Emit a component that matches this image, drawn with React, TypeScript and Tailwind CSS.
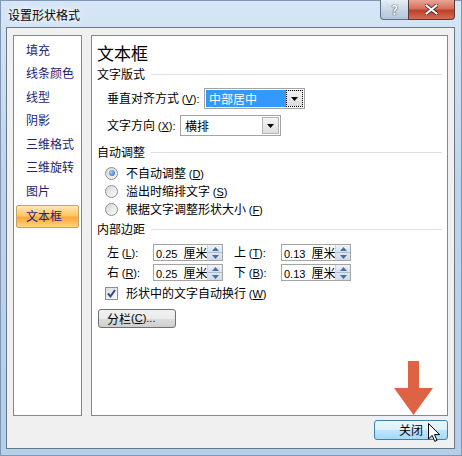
import type { ReactNode } from 'react';

const FONT = { fontFamily: '"Noto Sans CJK SC", "Noto Sans", sans-serif' };
const LATIN = { fontFamily: '"Liberation Sans", sans-serif' };

const items = ['填充', '线条颜色', '线型', '阴影', '三维格式', '三维旋转', '图片'];

function Key({ k, colon }: { k: string; colon?: boolean }) {
  return (
    <span className="text-[11px]" style={LATIN}>
      (<span className="underline">{k}</span>){colon ? ':' : ''}
    </span>
  );
}

function Section({ title }: { title: string }) {
  return (
    <div className="flex h-[18px] items-center gap-[6px] pr-[5px]">
      <span>{title}</span>
      <div className="h-px flex-1 bg-[#d5dfe5]" />
    </div>
  );
}

function Arrow() {
  return (
    <svg width="7" height="4" viewBox="0 0 7 4">
      <path d="M0 0h7L3.5 4z" fill="#000" />
    </svg>
  );
}

function Radio({ on, children }: { on?: boolean; children: ReactNode }) {
  return (
    <div className="flex h-[18px] items-center pl-[8px]">
      <div className="flex h-[13px] w-[13px] items-center justify-center rounded-full border border-[#8e8f8f] bg-[linear-gradient(135deg,#d9d9d9,#fafafa)]">
        {on && <div className="h-[6px] w-[6px] rounded-full bg-[radial-gradient(circle_at_35%_35%,#9fd0ff,#1e63b8)]" />}
      </div>
      <span className="ml-[8px]">{children}</span>
    </div>
  );
}

function Spin({ value }: { value: string }) {
  return (
    <div className="flex h-[17px] w-[70px] shrink-0 border border-[#a5a5a5] bg-white">
      <div className="flex-1 overflow-hidden whitespace-nowrap pl-[2px] text-[12px] leading-[15px]">
        <span className="text-[11px]" style={LATIN}>
          {value}&nbsp;&nbsp;
        </span>
        厘米
      </div>
      <div className="flex w-[15px] flex-col border-l border-[#c9d3dd]">
        <div className="flex flex-1 items-center justify-center border-b border-[#aebccb] bg-[linear-gradient(#eef3f8,#d9e3ee)]">
          <svg width="7" height="4" viewBox="0 0 7 4">
            <path d="M0 4h7L3.5 0z" fill="#4b6fa0" />
          </svg>
        </div>
        <div className="flex flex-1 items-center justify-center bg-[linear-gradient(#dfe7f0,#cfdbe8)]">
          <svg width="7" height="4" viewBox="0 0 7 4">
            <path d="M0 0h7L3.5 4z" fill="#4b6fa0" />
          </svg>
        </div>
      </div>
    </div>
  );
}

export default function App() {
  return (
    <div
      className="relative flex h-[456px] w-[462px] flex-col overflow-hidden bg-[linear-gradient(to_bottom,#d6e6f6,#bcd4ec_40%,#b6cfe9)] pb-[7px] pl-[6px] pr-[7px] text-[12px] text-black shadow-[inset_0_0_0_1px_#7f97b5]"
      style={FONT}
    >
      <div className="flex h-[27px] shrink-0 items-start justify-between">
        <div className="pl-[2px] pt-[7px] text-[12px] leading-[16px] [text-shadow:0_0_5px_#fff,0_0_8px_#fff]">
          设置形状格式
        </div>
        <div className="flex">
          <div className="flex h-[20px] w-[28px] items-center justify-center rounded-bl-[4px] border border-r-0 border-t-0 border-[#5b6f88] bg-[linear-gradient(#e7eef6,#c8d6e5_50%,#b4c6da)] text-[13px] font-bold text-white [text-shadow:0_0_1px_#29374a,0_0_1px_#29374a]">
            ?
          </div>
          <div className="flex h-[20px] w-[47px] items-center justify-center rounded-br-[4px] border border-t-0 border-[#5b3a36] bg-[linear-gradient(#e8a596,#d3705b_45%,#c0402a_55%,#d46d52)]">
            <svg width="13" height="11" viewBox="0 0 13 11">
              <path d="M1.5 1.5l10 8M11.5 1.5l-10 8" stroke="#3a2420" strokeWidth="3.6" strokeLinecap="square" />
              <path d="M1.5 1.5l10 8M11.5 1.5l-10 8" stroke="#fff" strokeWidth="2" strokeLinecap="square" />
            </svg>
          </div>
        </div>
      </div>

      <div className="flex flex-1 flex-col border border-[#6b7887] bg-[#f0f0f0]">
        <div className="flex gap-[9px] pl-[6px] pt-[7px]">
          <div className="h-[381px] w-[69px] border border-[#828790] bg-white pt-[2px] text-[#1d2470]">
            {items.map((t) => (
              <div key={t} className="flex h-[23.5px] items-center pl-[12px]">
                {t}
              </div>
            ))}
            <div className="mx-[2px] mt-[2px] flex h-[23px] items-center rounded-[2px] border border-[#c2a36c] bg-[linear-gradient(to_bottom,#fee8b4,#fec566_45%,#ffa83a_55%,#ffd478)] pl-[9px] text-[#1d2470]">
              文本框
            </div>
          </div>

          <div className="flex h-[381px] w-[357px] flex-col border border-[#828790] bg-white pl-[5px]">
            <div className="mt-[6px] h-[21px] text-[17px] leading-[21px]">文本框</div>
            <div className="mt-[2px]">
              <Section title="文字版式" />
            </div>

            <div className="mt-[5px] flex h-[21px] items-center pl-[10px]">
              <span className="w-[97px] shrink-0 whitespace-nowrap">
                垂直对齐方式 <Key k="V" colon />
              </span>
              <div className="flex h-[21px] w-[101px] border border-[#a3a3a3] bg-white p-px">
                <div className="flex flex-1 items-center bg-[#3399ff] pl-[3px] text-white">中部居中</div>
                <div className="flex w-[17px] items-center justify-center border border-dotted border-black bg-[linear-gradient(#f2f2f2,#dcdcdc)]">
                  <Arrow />
                </div>
              </div>
            </div>

            <div className="mt-[6px] flex h-[21px] items-center pl-[10px]">
              <span className="w-[73px] shrink-0 whitespace-nowrap">
                文字方向 <Key k="X" colon />
              </span>
              <div className="flex h-[21px] w-[101px] border border-[#a3a3a3] bg-white p-px">
                <div className="flex flex-1 items-center pl-[3px]">横排</div>
                <div className="flex w-[17px] items-center justify-center border border-[#b4b4b4] bg-[linear-gradient(#f4f4f4,#dedede)]">
                  <Arrow />
                </div>
              </div>
            </div>

            <div className="mt-[7px]">
              <Section title="自动调整" />
            </div>
            <div className="mt-[3px]">
              <Radio on>
                不自动调整 <Key k="D" />
              </Radio>
              <Radio>
                溢出时缩排文字 <Key k="S" />
              </Radio>
              <Radio>
                根据文字调整形状大小 <Key k="F" />
              </Radio>
            </div>

            <div className="mt-[2px]">
              <Section title="内部边距" />
            </div>

            <div className="mt-[6px] flex h-[17px] items-center pl-[10px]">
              <span className="w-[46px] shrink-0 whitespace-nowrap">
                左 <Key k="L" colon />
              </span>
              <Spin value="0.25" />
              <span className="ml-[11px] w-[47px] shrink-0 whitespace-nowrap">
                上 <Key k="T" colon />
              </span>
              <Spin value="0.13" />
            </div>
            <div className="mt-[3px] flex h-[17px] items-center pl-[10px]">
              <span className="w-[46px] shrink-0 whitespace-nowrap">
                右 <Key k="R" colon />
              </span>
              <Spin value="0.25" />
              <span className="ml-[11px] w-[47px] shrink-0 whitespace-nowrap">
                下 <Key k="B" colon />
              </span>
              <Spin value="0.13" />
            </div>

            <div className="mt-[3px] flex h-[18px] items-center pl-[8px]">
              <div className="flex h-[13px] w-[13px] items-center justify-center border border-[#8e8f8f] bg-[linear-gradient(135deg,#dcdcdc,#fbfbfb)]">
                <svg width="9" height="9" viewBox="0 0 9 9">
                  <path d="M1 4.5l2.5 2.8L8 1" fill="none" stroke="#2e4a9a" strokeWidth="2" />
                </svg>
              </div>
              <span className="ml-[8px]">
                形状中的文字自动换行 <Key k="W" />
              </span>
            </div>

            <div className="ml-px mt-[7px] flex h-[19px] w-[78px] items-center rounded-[3px] border border-[#707070] bg-[linear-gradient(#f2f2f2,#ebebeb_50%,#dddddd_50%,#cfcfcf)] pl-[8px]">
              分栏 <Key k="C" />
              <span style={LATIN} className="text-[11px]">
                ...
              </span>
            </div>
          </div>
        </div>

        <div className="flex justify-end pr-[6px] pt-[4px]">
          <div className="flex h-[20px] w-[74px] items-center justify-center rounded-[3px] border border-[#3c7fb1] bg-[linear-gradient(#eaf6fd,#d9f0fc_50%,#bee6fd_50%,#a7d9f5)]">
            关闭
          </div>
        </div>
      </div>

      <svg className="absolute left-[394px] top-[361px]" width="39" height="54" viewBox="0 0 39 54">
        <path d="M14 0h11v27h14L19.5 54 0 27h14z" fill="#de6344" />
      </svg>

      <svg className="absolute left-[428px] top-[423px]" width="13" height="20" viewBox="0 0 13 20">
        <path d="M0.5 0.5v15.5l3.7-3.6 2.6 6 2.2-1-2.5-5.8h5.2z" fill="#fff" stroke="#000" strokeWidth="1" />
      </svg>
    </div>
  );
}
